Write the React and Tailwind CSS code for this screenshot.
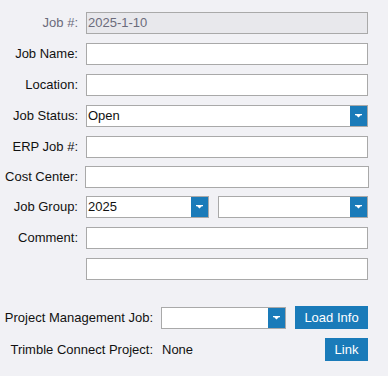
import React from "react";

function Arrow() {
  return (
    <svg width="7" height="4" viewBox="0 0 7 4" fill="white">
      <path d="M0 0h7v1.2H0z M1 1h5L3.5 3.6z" />
    </svg>
  );
}

function TextBox({ value = "", disabled = false, className = "" }) {
  return (
    <div
      className={`h-[22px] border border-[#a9a9a9] flex items-center px-[1px] ${
        disabled ? "bg-[#e8e8ec] text-[#6b6b7b]" : "bg-white text-[#111]"
      } ${className}`}
    >
      {value}
    </div>
  );
}

function Select({ value = "", className = "" }) {
  return (
    <div
      className={`h-[22px] border border-[#a9a9a9] bg-white flex items-stretch ${className}`}
    >
      <div className="flex-1 flex items-center px-[1px] text-[#111]">{value}</div>
      <div className="w-[17px] bg-[#1a7bb9] flex items-center justify-center">
        <Arrow />
      </div>
    </div>
  );
}

function Row({ label, muted, children, className = "" }) {
  return (
    <div className={`flex items-center ${className}`}>
      <div
        className={`w-[78px] text-right ${muted ? "text-[#6b6b7b]" : "text-[#111]"}`}
      >
        {label}
      </div>
      <div className="flex-1 ml-2 flex">{children}</div>
    </div>
  );
}

export default function App() {
  return (
    <div
      className="w-[388px] h-[376px] bg-[#f1f1f5] text-[13px] pt-3 pr-5"
      style={{ fontFamily: '"Liberation Sans", Arial, sans-serif' }}
    >
      <div className="flex flex-col">
        <Row label="Job #:" muted>
          <TextBox value="2025-1-10" disabled className="flex-1" />
        </Row>
        <Row label="Job Name:" className="mt-[9px]">
          <TextBox className="flex-1" />
        </Row>
        <Row label="Location:" className="mt-[9px]">
          <TextBox className="flex-1" />
        </Row>
        <Row label="Job Status:" className="mt-[9px]">
          <Select value="Open" className="flex-1" />
        </Row>
        <Row label="ERP Job #:" className="mt-[9px]">
          <TextBox className="flex-1" />
        </Row>
        <Row label="Cost Center:" className="mt-[8px]">
          <TextBox className="flex-1 ml-[-1px] mr-[-1px]" />
        </Row>
        <Row label="Job Group:" className="mt-[8px]">
          <Select value="2025" className="w-[123px]" />
          <Select className="flex-1 ml-[9px]" />
        </Row>
        <Row label="Comment:" className="mt-[9px]">
          <TextBox className="flex-1" />
        </Row>
        <Row label="" className="mt-[9px]">
          <TextBox className="flex-1" />
        </Row>
      </div>

      <div className="mt-[26px] flex items-center">
        <div className="w-[153px] text-right text-[#111]">Project Management Job:</div>
        <Select className="w-[125px] ml-2" />
        <button className="ml-[9px] w-[73px] h-[23px] bg-[#1a7bb9] text-white">
          Load Info
        </button>
      </div>
      <div className="mt-[9px] flex items-center">
        <div className="w-[153px] text-right text-[#111]">Trimble Connect Project:</div>
        <div className="ml-[9px] text-[#111]">None</div>
        <button className="ml-auto w-[43px] h-[23px] bg-[#1a7bb9] text-white">
          Link
        </button>
      </div>
    </div>
  );
}
